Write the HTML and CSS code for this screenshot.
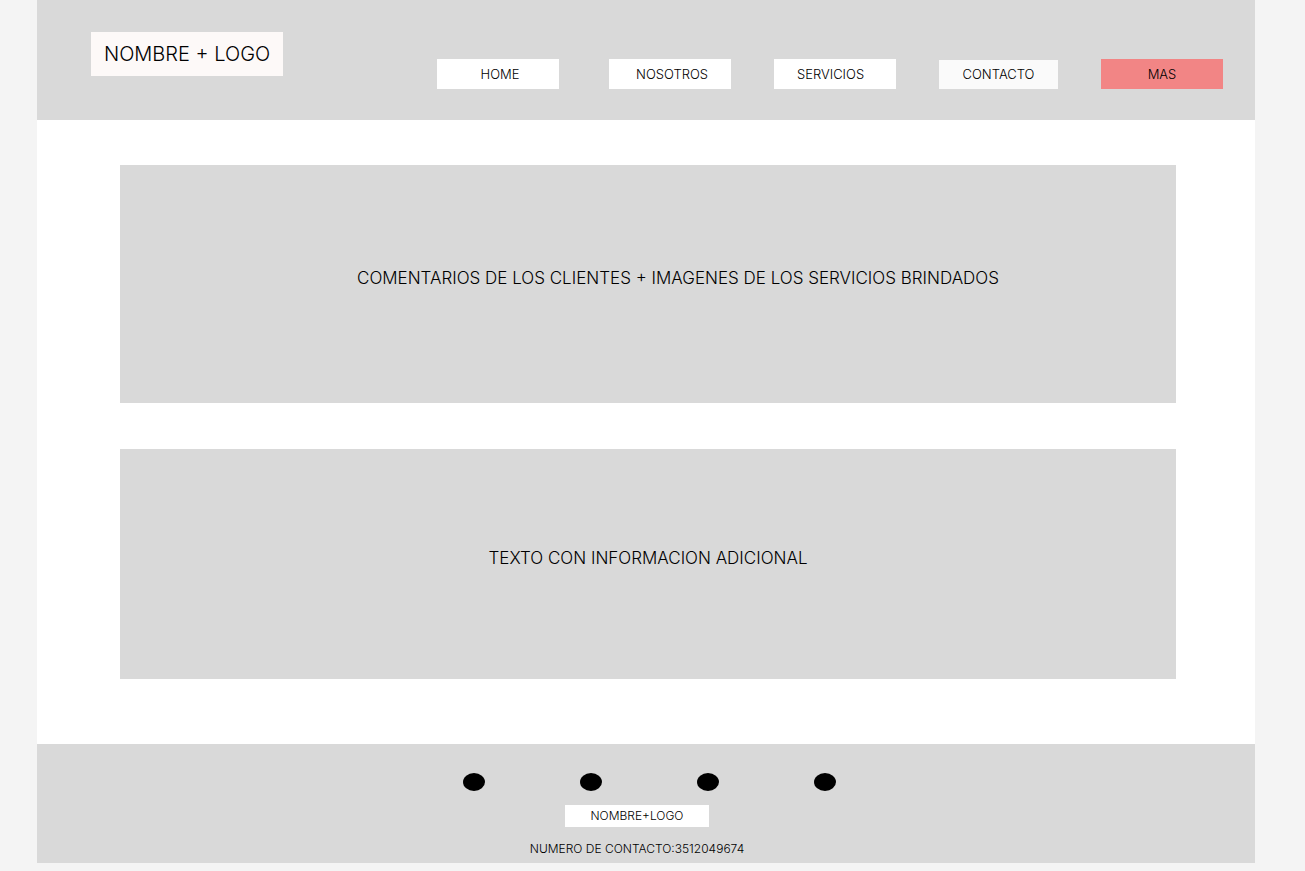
FILE: index.html
```html
<!DOCTYPE html>
<html lang="es">
<head>
<meta charset="utf-8">
<meta name="viewport" content="width=device-width, initial-scale=1">
<title>Nombre + Logo</title>
<link rel="stylesheet" href="styles.css">
</head>
<body>
<div class="page">
  <header class="header">
    <a class="brand" href="#">NOMBRE + LOGO</a>
    <nav class="nav">
      <a class="nav-link nav-link-main nav-link-first" href="#">HOME</a>
      <a class="nav-link nav-link-main" href="#">NOSOTROS</a>
      <a class="nav-link nav-link-start" href="#">SERVICIOS</a>
      <a class="nav-link nav-link-soft" href="#">CONTACTO</a>
      <a class="nav-link nav-link-accent" href="#">MAS</a>
    </nav>
  </header>
  <main class="main">
    <section class="panel panel-reviews">
      <p class="panel-text">COMENTARIOS DE LOS CLIENTES + IMAGENES DE LOS SERVICIOS BRINDADOS</p>
    </section>
    <section class="panel">
      <p class="panel-text">TEXTO CON INFORMACION ADICIONAL</p>
    </section>
  </main>
  <footer class="footer">
    <div class="dots">
      <span class="dot"></span>
      <span class="dot"></span>
      <span class="dot"></span>
      <span class="dot"></span>
    </div>
    <div class="footer-info">
      <a class="footer-brand" href="#">NOMBRE+LOGO</a>
      <p class="phone">NUMERO DE CONTACTO:3512049674</p>
    </div>
  </footer>
</div>
</body>
</html>
```
FILE: styles.css
```css
* {
  box-sizing: border-box;
}

body {
  margin: 0;
  background: #f4f4f4;
  color: #000;
  font-family: Inter, "Liberation Sans", sans-serif;
  font-weight: 350;
}

a {
  color: inherit;
  text-decoration: none;
}

p {
  margin: 0;
}

.page {
  margin: 0 50px 0 37px;
  background: #fff;
}

.header {
  display: flex;
  justify-content: space-between;
  align-items: flex-start;
  padding: 32px 32px 31px 54px;
  background: #d9d9d9;
}

.brand {
  padding: 8px 13px;
  background: #fdf9f8;
  font-size: 20px;
  line-height: 28px;
  white-space: nowrap;
}

.nav {
  display: flex;
  align-items: flex-end;
  gap: 43px;
  padding-top: 27px;
}

.nav-link {
  width: 122px;
  background: #fff;
  font-size: 13px;
  line-height: 30px;
  text-align: center;
}

.nav-link-main {
  padding-left: 4px;
}

.nav-link-first {
  margin-right: 7px;
}

.nav-link-start {
  padding-left: 23px;
  text-align: left;
}

.nav-link-soft {
  width: 119px;
  background: #fafafa;
  line-height: 29px;
}

.nav-link-accent {
  background: #f28585;
}

.main {
  display: grid;
  gap: 46px;
  padding: 45px 79px 65px 83px;
}

.panel {
  display: flex;
  align-items: center;
  justify-content: center;
  min-height: 230px;
  padding-bottom: 12px;
  background: #d9d9d9;
}

.panel-reviews {
  min-height: 238px;
  padding-left: 60px;
}

.panel-text {
  font-size: 17px;
  line-height: 24px;
}

.footer {
  padding: 29px 0 4px;
  background: #d9d9d9;
}

.dots {
  display: flex;
  justify-content: center;
  gap: 95px;
  padding-left: 6px;
}

.dot {
  width: 22px;
  height: 18px;
  border-radius: 50%;
  background: #000;
}

.footer-info {
  display: flex;
  flex-direction: column;
  align-items: center;
  gap: 12px;
  padding: 14px 18px 0 0;
  font-size: 12px;
}

.footer-brand {
  padding: 0 26px;
  background: #fff;
  line-height: 22px;
}

.phone {
  line-height: 20px;
}
```
